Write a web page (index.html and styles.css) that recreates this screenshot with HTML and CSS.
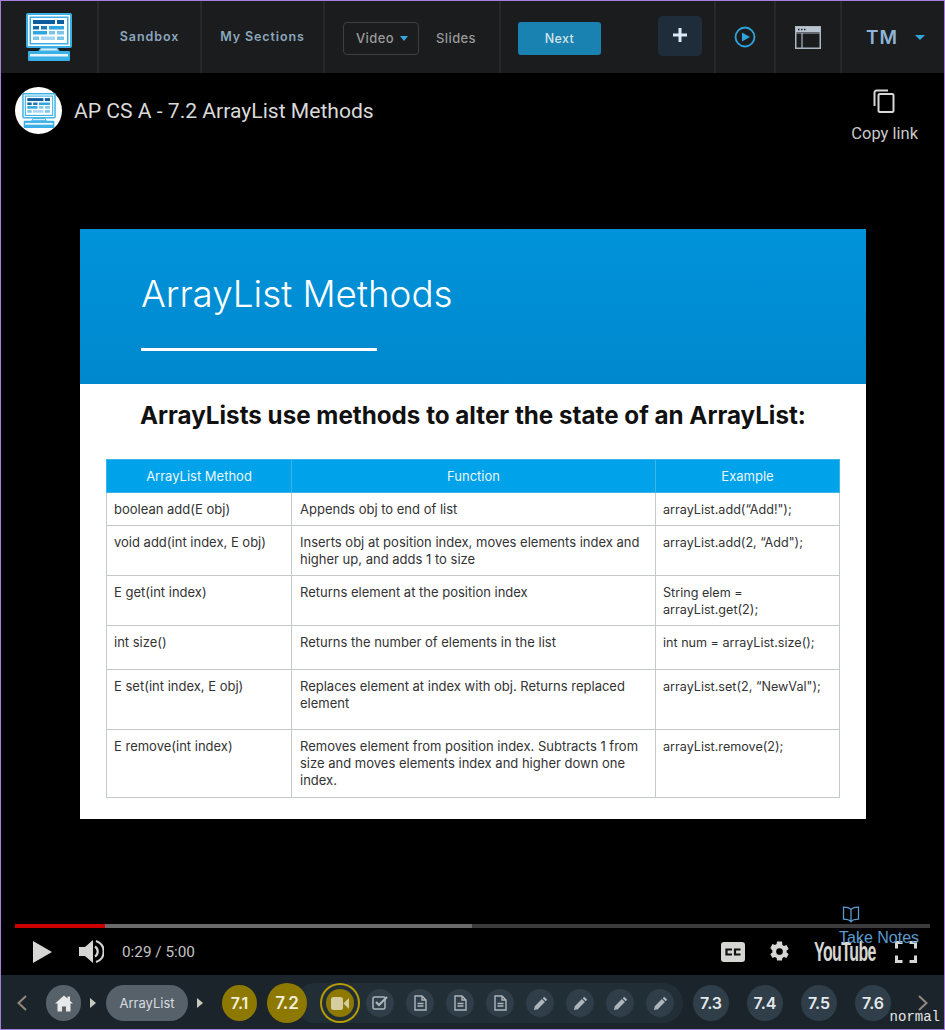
FILE: index.html
```html
<!DOCTYPE html>
<html lang="en">
<head>
  <meta charset="UTF-8">
  <title>AP CS A - 7.2 ArrayList Methods</title>
  <link rel="stylesheet" href="styles.css">
</head>
<body>
  <svg class="defs" width="0" height="0">
    <symbol id="monitor" viewBox="0 0 46 48">
      <rect x="0" y="0" width="46" height="35" rx="2" fill="#3bb0e6"/>
      <rect x="2" y="2" width="42" height="31" fill="#fff"/>
      <rect x="3.500" y="3.500" width="39" height="28" fill="#3bb0e6"/>
      <rect x="5" y="5" width="36" height="25" fill="#fff"/>
      <rect x="7" y="7" width="22" height="4" fill="#0f5c9c"/>
      <rect x="31" y="7" width="7" height="4" fill="#0f5c9c"/>
      <rect x="7" y="13" width="6" height="3.500" fill="#1469ab"/>
      <rect x="15" y="13" width="6" height="3.500" fill="#1f78b8"/>
      <rect x="23" y="13" width="15" height="3.500" fill="#2ea6e0"/>
      <rect x="7" y="18" width="14" height="3.500" fill="#2ea6e0"/>
      <rect x="23" y="18" width="6" height="3.500" fill="#7cc4e8"/>
      <rect x="31" y="18" width="7" height="3.500" fill="#7cc4e8"/>
      <rect x="7" y="23.500" width="6" height="3.500" fill="#7cc4e8"/>
      <rect x="15" y="23.500" width="14" height="3.500" fill="#a6d5f0"/>
      <rect x="31" y="23.500" width="7" height="3.500" fill="#7cc4e8"/>
      <path d="M13 38l2-3h16l2 3z" fill="#d9f0fb" stroke="#3bb0e6" stroke-width="1.200"/>
      <rect x="2" y="38" width="42" height="10" rx="1" fill="#3bb0e6"/>
      <rect x="4" y="41" width="38" height="2.500" fill="#e6f5fc"/>
    </symbol>
    <symbol id="doc" viewBox="0 0 13 16">
      <path d="M1 1h7l4 4v10H1z M8 1v4h4 M3.500 8.500h6 M3.500 11h6" fill="none" stroke="#aeb6ba" stroke-width="1.400"/>
    </symbol>
    <symbol id="pencil" viewBox="0 0 16 16">
      <path d="M12 .8l3.200 3.200-1.700 1.700-3.200-3.200z M9.500 3.300l3.200 3.200-7.600 7.600-4.100.9.900-4.100z" fill="#aeb6ba"/>
    </symbol>
  </svg>

  <div class="app">
    <header class="topbar">
      <a class="cell cell-logo"><svg class="logo" width="46" height="48"><use href="#monitor"/></svg></a>
      <a class="cell cell-sandbox">Sandbox</a>
      <a class="cell cell-sections">My Sections</a>
      <div class="cell cell-mode">
        <span class="mode-select">Video <i class="caret"></i></span>
        <span class="mode-link">Slides</span>
      </div>
      <div class="cell cell-next">
        <button class="next-btn">Next</button>
        <button class="plus-btn">
          <svg width="16" height="16" viewBox="0 0 16 16"><path d="M8 1v14M1 8h14" stroke="#dce9f7" stroke-width="3"/></svg>
        </button>
      </div>
      <div class="cell cell-icon">
        <svg width="22" height="22" viewBox="0 0 22 22"><circle cx="11" cy="11" r="9.500" fill="none" stroke="#2ea3dc" stroke-width="1.800"/><path d="M8 6.500l8 4.500-8 4.500z" fill="#2ea3dc"/></svg>
      </div>
      <div class="cell cell-icon cell-window">
        <svg width="26" height="23" viewBox="0 0 26 23"><rect x=".75" y=".75" width="24.500" height="21.500" fill="none" stroke="#aab6c2" stroke-width="1.500"/><rect x="1" y="1" width="24" height="5" fill="#b9c6d2"/><path d="M1 7h24M7 7v15" stroke="#aab6c2" stroke-width="1.200"/><path d="M3 3.500h1.500M6 3.500h1.500M9 3.500h1.500" stroke="#1b1c1e" stroke-width="1.500"/></svg>
      </div>
      <div class="cell cell-user">
        <span class="initials">TM</span><i class="caret caret-user"></i>
      </div>
    </header>

    <main class="player">
      <div class="video-title">
        <span class="channel"><svg width="34" height="35"><use href="#monitor"/></svg></span>
        <span class="title-text">AP CS A - 7.2 ArrayList Methods</span>
        <div class="copy-link">
          <svg width="24" height="24" viewBox="1 0 24 24"><path d="M16 1.500H4.500a2 2 0 0 0-2 2V17" fill="none" stroke="#d8d8d8" stroke-width="2"/><rect x="6.500" y="5" width="15" height="18" rx="1.500" fill="none" stroke="#d8d8d8" stroke-width="2"/></svg>
          <span>Copy link</span>
        </div>
      </div>

      <section class="slide">
        <div class="slide-head">
          <h1>ArrayList Methods</h1>
          <div class="slide-rule"></div>
        </div>
        <h2>ArrayLists use methods to alter the state of an ArrayList:</h2>
        <table class="methods">
          <colgroup><col class="col-a"><col class="col-b"><col class="col-c"></colgroup>
          <thead>
            <tr><th>ArrayList Method</th><th>Function</th><th>Example</th></tr>
          </thead>
          <tbody>
            <tr class="r1"><td>boolean add(E obj)</td><td>Appends obj to end of list</td><td>arrayList.add(“Add!");</td></tr>
            <tr class="r2"><td>void add(int index, E obj)</td><td>Inserts obj at position index, moves elements index and higher up, and adds 1 to size</td><td>arrayList.add(2, “Add");</td></tr>
            <tr class="r3"><td>E get(int index)</td><td>Returns element at the position index</td><td>String elem = arrayList.get(2);</td></tr>
            <tr class="r4"><td>int size()</td><td>Returns the number of elements in the list</td><td>int num = arrayList.size();</td></tr>
            <tr class="r5"><td>E set(int index, E obj)</td><td>Replaces element at index with obj. Returns replaced element</td><td>arrayList.set(2, “NewVal");</td></tr>
            <tr class="r6"><td>E remove(int index)</td><td>Removes element from position index. Subtracts 1 from size and moves elements index and higher down one index.</td><td>arrayList.remove(2);</td></tr>
          </tbody>
        </table>
      </section>

      <div class="progress">
        <div class="progress-played"></div>
        <div class="progress-loaded"></div>
      </div>

      <div class="controls">
        <svg class="ctl-play" width="19" height="24" viewBox="0 0 19 24"><path d="M0 1l19 11L0 23z" fill="#d6d6d2"/></svg>
        <svg class="ctl-volume" width="25" height="25" viewBox="0 0 25 25"><path d="M0 8h6l8-7v23l-8-7H0z" fill="#d6d6d2"/><path d="M16 7.500a6 6 0 0 1 0 10M17 2a11 11 0 0 1 0 21" fill="none" stroke="#d6d6d2" stroke-width="2.200"/></svg>
        <span class="ctl-time">0:29 / 5:00</span>
        <svg class="ctl-cc" width="24" height="20" viewBox="0 0 24 20"><rect width="24" height="20" rx="3" fill="#d6d6d2"/><path d="M11 7.500H5.500v5H11M19.500 7.500H14v5h5.500" fill="none" stroke="#111" stroke-width="2.200"/></svg>
        <svg class="ctl-gear" width="23" height="23" viewBox="0 0 24 24"><path fill="#d6d6d2" fill-rule="evenodd" d="M19.400 13a7.600 7.600 0 0 0 0-2l2.200-1.700-2.300-4-2.600 1a7.600 7.600 0 0 0-1.700-1L14.600 1.500H9.400L9 4.300a7.600 7.600 0 0 0-1.700 1l-2.600-1-2.300 4L4.600 11a7.600 7.600 0 0 0 0 2l-2.200 1.700 2.300 4 2.600-1a7.600 7.600 0 0 0 1.700 1l.4 2.800h5.200l.4-2.800a7.600 7.600 0 0 0 1.700-1l2.600 1 2.300-4zM12 15.500a3.500 3.500 0 1 1 0-7 3.500 3.500 0 0 1 0 7z"/></svg>
        <span class="ctl-youtube">YouTube</span>
        <svg class="ctl-full" width="22" height="22" viewBox="0 0 22 22"><path d="M1.500 7.500V1.500h6M14.500 1.500h6v6M20.500 14.500v6h-6M7.500 20.500h-6v-6" fill="none" stroke="#d6d6d2" stroke-width="3"/></svg>
      </div>

      <div class="take-notes">
        <svg width="18" height="17" viewBox="0 0 18 17"><path d="M9 3.500C7.500 2 5 1.200 1.500 1.200v12C5 13.200 7.500 14 9 15.800c1.500-1.800 4-2.600 7.500-2.600v-12C13 1.200 10.500 2 9 3.500zM9 3.500v12.300" fill="none" stroke="#5b9bd0" stroke-width="1.300"/></svg>
        <span>Take Notes</span>
      </div>
    </main>

    <footer class="lessonbar">
      <svg class="chev" width="10" height="16" viewBox="0 0 10 16"><path d="M9 1L1.500 8 9 15" fill="none" stroke="#93897a" stroke-width="2"/></svg>
      <span class="crumb crumb-home">
        <svg width="18" height="17" viewBox="0 0 18 17"><path d="M9 .5L0 8.500h2.500V16.500h4.500v-5h4v5h4.500V8.500H18l-3-2.700V1.500h-2.500v2z" fill="#e8e8e8"/></svg>
      </span>
      <i class="arrow"></i>
      <span class="crumb crumb-unit">ArrayList</span>
      <i class="arrow"></i>
      <span class="lesson done">7.1</span>
      <span class="lesson done current">7.2</span>
      <div class="activities">
        <span class="act act-video">
          <svg width="18" height="13" viewBox="0 0 18 13"><rect width="12" height="13" rx="2.500" fill="#d3cda0"/><path d="M12.500 6.500L18 1v11z" fill="#d3cda0"/></svg>
        </span>
        <span class="act">
          <svg width="16" height="16" viewBox="0 0 16 16"><rect x="1" y="2" width="12" height="12" rx="1.500" fill="none" stroke="#aeb6ba" stroke-width="1.500"/><path d="M4 7l3 3 8-8" fill="none" stroke="#aeb6ba" stroke-width="2.200"/></svg>
        </span>
        <span class="act"><svg width="13" height="16"><use href="#doc"/></svg></span>
        <span class="act"><svg width="13" height="16"><use href="#doc"/></svg></span>
        <span class="act"><svg width="13" height="16"><use href="#doc"/></svg></span>
        <span class="act"><svg width="15" height="15"><use href="#pencil"/></svg></span>
        <span class="act"><svg width="15" height="15"><use href="#pencil"/></svg></span>
        <span class="act"><svg width="15" height="15"><use href="#pencil"/></svg></span>
        <span class="act"><svg width="15" height="15"><use href="#pencil"/></svg></span>
      </div>
      <span class="lesson">7.3</span>
      <span class="lesson">7.4</span>
      <span class="lesson">7.5</span>
      <span class="lesson">7.6</span>
      <svg class="chev chev-next" width="10" height="16" viewBox="0 0 10 16"><path d="M1 1l7.500 7L1 15" fill="none" stroke="#93897a" stroke-width="2"/></svg>
      <span class="speed">normal</span>
    </footer>
  </div>
</body>
</html>
```

FILE: styles.css
```css
* {
  box-sizing: border-box;
}
body {
  margin: 0;
  background: #000;
  font-family: Roboto, sans-serif;
}
.defs {
  position: absolute;
}
.app {
  display: flex;
  flex-direction: column;
  width: 945px;
  height: 1030px;
  border: 1px solid #a67fdc;
  background: #000;
  overflow: hidden;
}

/* top bar */
.topbar {
  display: flex;
  flex: none;
  height: 72px;
  background: #1b1c1e;
}
.cell {
  display: flex;
  align-items: center;
  justify-content: center;
  flex: none;
  height: 100%;
  border-right: 2px solid #26282a;
  font-family: Inter, sans-serif;
  font-size: 12.500px;
  font-weight: 600;
  letter-spacing: .9px;
  color: #8ba7bd;
}
.cell-logo { width: 98px; }
.cell-sandbox { width: 103px; padding-bottom: 2px; }
.cell-sections { width: 123px; padding-bottom: 2px; }
.cell-mode {
  justify-content: flex-start;
  width: 176px;
  padding: 2px 0 0 18px;
}
.mode-select {
  display: flex;
  align-items: center;
  gap: 6px;
  height: 33px;
  width: 76px;
  padding-left: 12px;
  border: 1px solid #3e3e3e;
  border-radius: 4px;
  font-size: 13px;
  color: #999;
  font-weight: 500;
  letter-spacing: .4px;
}
.mode-link {
  margin-left: 17px;
  font-size: 13px;
  color: #999;
  font-weight: 500;
  letter-spacing: .4px;
}
.caret {
  width: 0;
  height: 0;
  border-left: 4.500px solid transparent;
  border-right: 4.500px solid transparent;
  border-top: 5px solid #36a5dd;
}
.cell-next {
  justify-content: flex-start;
  gap: 57px;
  width: 215px;
  padding: 2px 0 0 17px;
}
.next-btn {
  width: 83px;
  height: 33px;
  border: 0;
  border-radius: 3px;
  background: #1a82b0;
  color: #d5e3ea;
  font-family: Inter, sans-serif;
  font-size: 12.500px;
  font-weight: 500;
  letter-spacing: .4px;
}
.plus-btn {
  display: flex;
  align-items: center;
  justify-content: center;
  width: 44px;
  height: 40px;
  margin-bottom: 4px;
  padding: 0 0 2px;
  border: 0;
  border-radius: 5px;
  background: #1f2d3a;
}
.cell-icon { width: 60px; }
.cell-window { width: 66px; }
.cell-user {
  flex: 1;
  border-right: 0;
  justify-content: flex-start;
  padding-left: 24px;
}
.initials {
  font-size: 19px;
  font-weight: 600;
  color: #8fb4d8;
  letter-spacing: 1px;
}
.caret-user {
  margin-left: 17px;
  border-left-width: 5px;
  border-right-width: 5px;
}

/* player */
.player {
  position: relative;
  flex: 1;
  min-height: 0;
  display: flex;
  flex-direction: column;
}
.video-title {
  display: flex;
  align-items: flex-start;
  flex: none;
  height: 156px;
  padding: 14px 26px 0 14px;
}
.channel {
  display: flex;
  align-items: center;
  justify-content: center;
  flex: none;
  width: 47px;
  height: 47px;
  border-radius: 50%;
  background: #fff;
}
.title-text {
  margin: 11px 0 0 12px;
  font-size: 21.100px;
  line-height: 26px;
  color: #d9d9d9;
}
.copy-link {
  display: flex;
  flex-direction: column;
  align-items: center;
  gap: 11px;
  margin-left: auto;
  padding-top: 2px;
  font-size: 16.500px;
  line-height: 20px;
  color: #c9c9c9;
}

/* slide */
.slide {
  flex: none;
  width: 786px;
  height: 590px;
  margin-left: 79px;
  background: #fff;
  font-family: Inter, sans-serif;
  color: #333;
}
.slide-head {
  height: 155px;
  padding: 42px 0 0 61px;
  background: linear-gradient(#0093da, #0088ce);
}
.slide h1 {
  margin: 0;
  font-size: 36.800px;
  line-height: 46px;
  font-weight: 300;
  color: #fff;
}
.slide-rule {
  width: 236px;
  height: 3px;
  margin-top: 31px;
  background: #fff;
}
.slide h2 {
  margin: 17px 0 0 60px;
  font-size: 24.200px;
  line-height: 30px;
  font-weight: 700;
  color: #111;
  white-space: nowrap;
}
.methods {
  width: 734px;
  margin: 28px 0 0 26px;
  border-collapse: collapse;
  table-layout: fixed;
  font-size: 13px;
  line-height: 17px;
}
.col-a { width: 185px; }
.col-b { width: 364px; }
.methods th,
.methods td {
  border: 1px solid #c4c8ca;
  padding: 8px 7px 6px;
  vertical-align: top;
  text-align: left;
  font-weight: 400;
}
.methods td:nth-child(2) {
  padding-left: 8px;
}
.methods td:nth-child(3) {
  font-size: 12.600px;
}
.methods th {
  height: 33px;
  padding: 0;
  background: #00a3ea;
  color: #e8f6fd;
  text-align: center;
  vertical-align: middle;
  border-color: #3cb4e8;
}
.r1 td { height: 33px; }
.r2 td, .r3 td { height: 50px; }
.r4 td { height: 44px; }
.r5 td { height: 60px; }
.r6 td { height: 68px; }

/* video controls */
.progress {
  display: flex;
  flex: none;
  width: 915px;
  height: 4px;
  margin: 105px 0 0 14px;
  background: #3c3c3c;
}
.progress-played {
  width: 90px;
  background: #cc0000;
}
.progress-loaded {
  width: 367px;
  background: #6b6b6b;
}
.controls {
  display: flex;
  align-items: center;
  flex: 1;
  padding: 0 27px 0 32px;
}
.ctl-volume { margin-left: 27px; }
.ctl-time {
  margin-left: 18px;
  font-size: 15.300px;
  color: #c4c4c4;
}
.ctl-cc { margin-left: auto; }
.ctl-gear { margin-left: 23px; }
.ctl-youtube {
  width: 62px;
  margin-left: 23px;
  font-family: "Liberation Sans", sans-serif;
  font-size: 28px;
  font-weight: 700;
  letter-spacing: -1px;
  white-space: nowrap;
  color: #d6d6d2;
  transform: scaleX(.57);
  transform-origin: left center;
}
.ctl-full { margin-left: 19px; }
.take-notes {
  position: absolute;
  top: 833px;
  left: 838px;
  display: flex;
  flex-direction: column;
  align-items: flex-start;
  gap: 6px;
  font-family: "Liberation Sans", sans-serif;
  font-size: 16px;
  line-height: 18px;
  color: #5b9bd0;
}
.take-notes svg {
  margin-left: 3px;
}

/* lesson bar */
.lessonbar {
  position: relative;
  display: flex;
  align-items: center;
  flex: none;
  height: 54px;
  padding: 2px 0 0 16px;
  background: #1b242b;
  font-family: Inter, sans-serif;
}
.chev { flex: none; }
.chev-next { margin-left: 27px; }
.crumb {
  display: flex;
  align-items: center;
  justify-content: center;
  flex: none;
  height: 36px;
  border-radius: 18px;
  background: #56616a;
  color: #d9dde0;
  font-size: 13px;
}
.crumb-home {
  width: 35px;
  margin-left: 19px;
}
.crumb-unit { width: 82px; }
.arrow {
  flex: none;
  width: 0;
  height: 0;
  margin: 0 10px 0 9px;
  border-top: 5px solid transparent;
  border-bottom: 5px solid transparent;
  border-left: 6px solid #c9c9c0;
}
.lesson {
  position: relative;
  z-index: 1;
  display: flex;
  align-items: center;
  justify-content: center;
  flex: none;
  width: 36px;
  height: 36px;
  margin-left: 18px;
  border-radius: 50%;
  background: #2f3e48;
  color: #e4e8ea;
  font-size: 16px;
  font-weight: 600;
}
.lesson.done {
  width: 35px;
  background: #8e7900;
  color: #f1eedc;
}
.arrow + .lesson { margin-left: 9px; }
.lesson.current {
  width: 40px;
  height: 40px;
  margin-left: 10px;
  font-size: 17px;
}
.activities {
  display: flex;
  align-items: center;
  flex: none;
  gap: 12px;
  width: 388px;
  height: 40px;
  margin-left: -12px;
  padding-left: 31px;
  border-radius: 20px;
  background: #222e36;
}
.activities + .lesson { margin-left: 10px; }
.act {
  display: flex;
  align-items: center;
  justify-content: center;
  flex: none;
  width: 28px;
  height: 28px;
  border-radius: 50%;
  background: #2f3e48;
}
.act-video {
  background: #8e7900;
  box-shadow: 0 0 0 4px #222e36, 0 0 0 6px #b69c00;
}
.speed {
  position: absolute;
  right: 4px;
  bottom: 4px;
  font-family: "Liberation Mono", monospace;
  font-size: 14px;
  line-height: 16px;
  color: #e6e6e6;
}
```
